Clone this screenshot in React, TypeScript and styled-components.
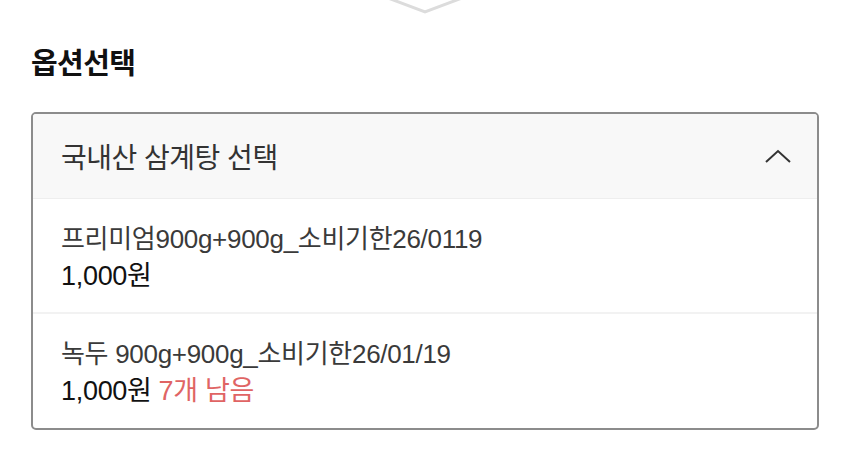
import React from "react";
import styled, { createGlobalStyle } from "styled-components";

const Global = createGlobalStyle`
  html, body { margin: 0; padding: 0; background: #fff; }
  body { font-family: "Liberation Sans", "Noto Sans CJK KR", sans-serif; }
`;

const Page = styled.div`
  width: 849px;
  height: 454px;
  overflow: hidden;
  display: flex;
  flex-direction: column;
`;

const TopHandle = styled.div`
  display: flex;
  justify-content: center;
  height: 14px;
`;

const Section = styled.section`
  padding: 0 30px 0 31px;
`;

const Title = styled.h2`
  margin: 31px 0 0 0;
  font-size: 29px;
  line-height: 38px;
  font-weight: 700;
  color: #111;
  letter-spacing: -0.6px;
`;

const Box = styled.div`
  margin-top: 29px;
  border: 2px solid #8c8c8c;
  border-radius: 5px;
  overflow: hidden;
`;

const Header = styled.div`
  display: flex;
  align-items: center;
  justify-content: space-between;
  height: 84px;
  padding: 0 26px 0 28px;
  background: #f8f8f8;
  border-bottom: 1px solid #eeeeee;
`;

const HeaderText = styled.span`
  font-size: 28px;
  color: #333;
  letter-spacing: -0.5px;
`;

const Item = styled.div<{ $last?: boolean }>`
  padding: 22px 28px 0 28px;
  height: ${(p) => (p.$last ? "114px" : "115px")};
  box-sizing: border-box;
  border-bottom: ${(p) => (p.$last ? "none" : "2px solid #f2f2f2")};
`;

const Name = styled.div`
  font-size: 26px;
  line-height: 37px;
  color: #3a3a3a;
  letter-spacing: -0.3px;
`;

const Price = styled.div`
  font-size: 27px;
  line-height: 37px;
  color: #111;
  letter-spacing: -0.3px;
`;

const Stock = styled.span`
  color: #e06464;
  margin-left: 7px;
`;

export default function App() {
  return (
    <Page>
      <Global />
      <TopHandle>
        <svg width="80" height="14" viewBox="0 0 80 14">
          <polyline
            points="3,-2 40,12 77,-2"
            fill="none"
            stroke="#dcdcdc"
            strokeWidth="3"
          />
        </svg>
      </TopHandle>
      <Section>
        <Title>옵션선택</Title>
        <Box>
          <Header>
            <HeaderText>국내산 삼계탕 선택</HeaderText>
            <svg width="26" height="16" viewBox="0 0 26 16">
              <polyline
                points="1,14 13,3 25,14"
                fill="none"
                stroke="#333"
                strokeWidth="2"
              />
            </svg>
          </Header>
          <Item>
            <Name>프리미엄900g+900g_소비기한26/0119</Name>
            <Price>1,000원</Price>
          </Item>
          <Item $last>
            <Name>녹두 900g+900g_소비기한26/01/19</Name>
            <Price>
              1,000원<Stock>7개 남음</Stock>
            </Price>
          </Item>
        </Box>
      </Section>
    </Page>
  );
}
